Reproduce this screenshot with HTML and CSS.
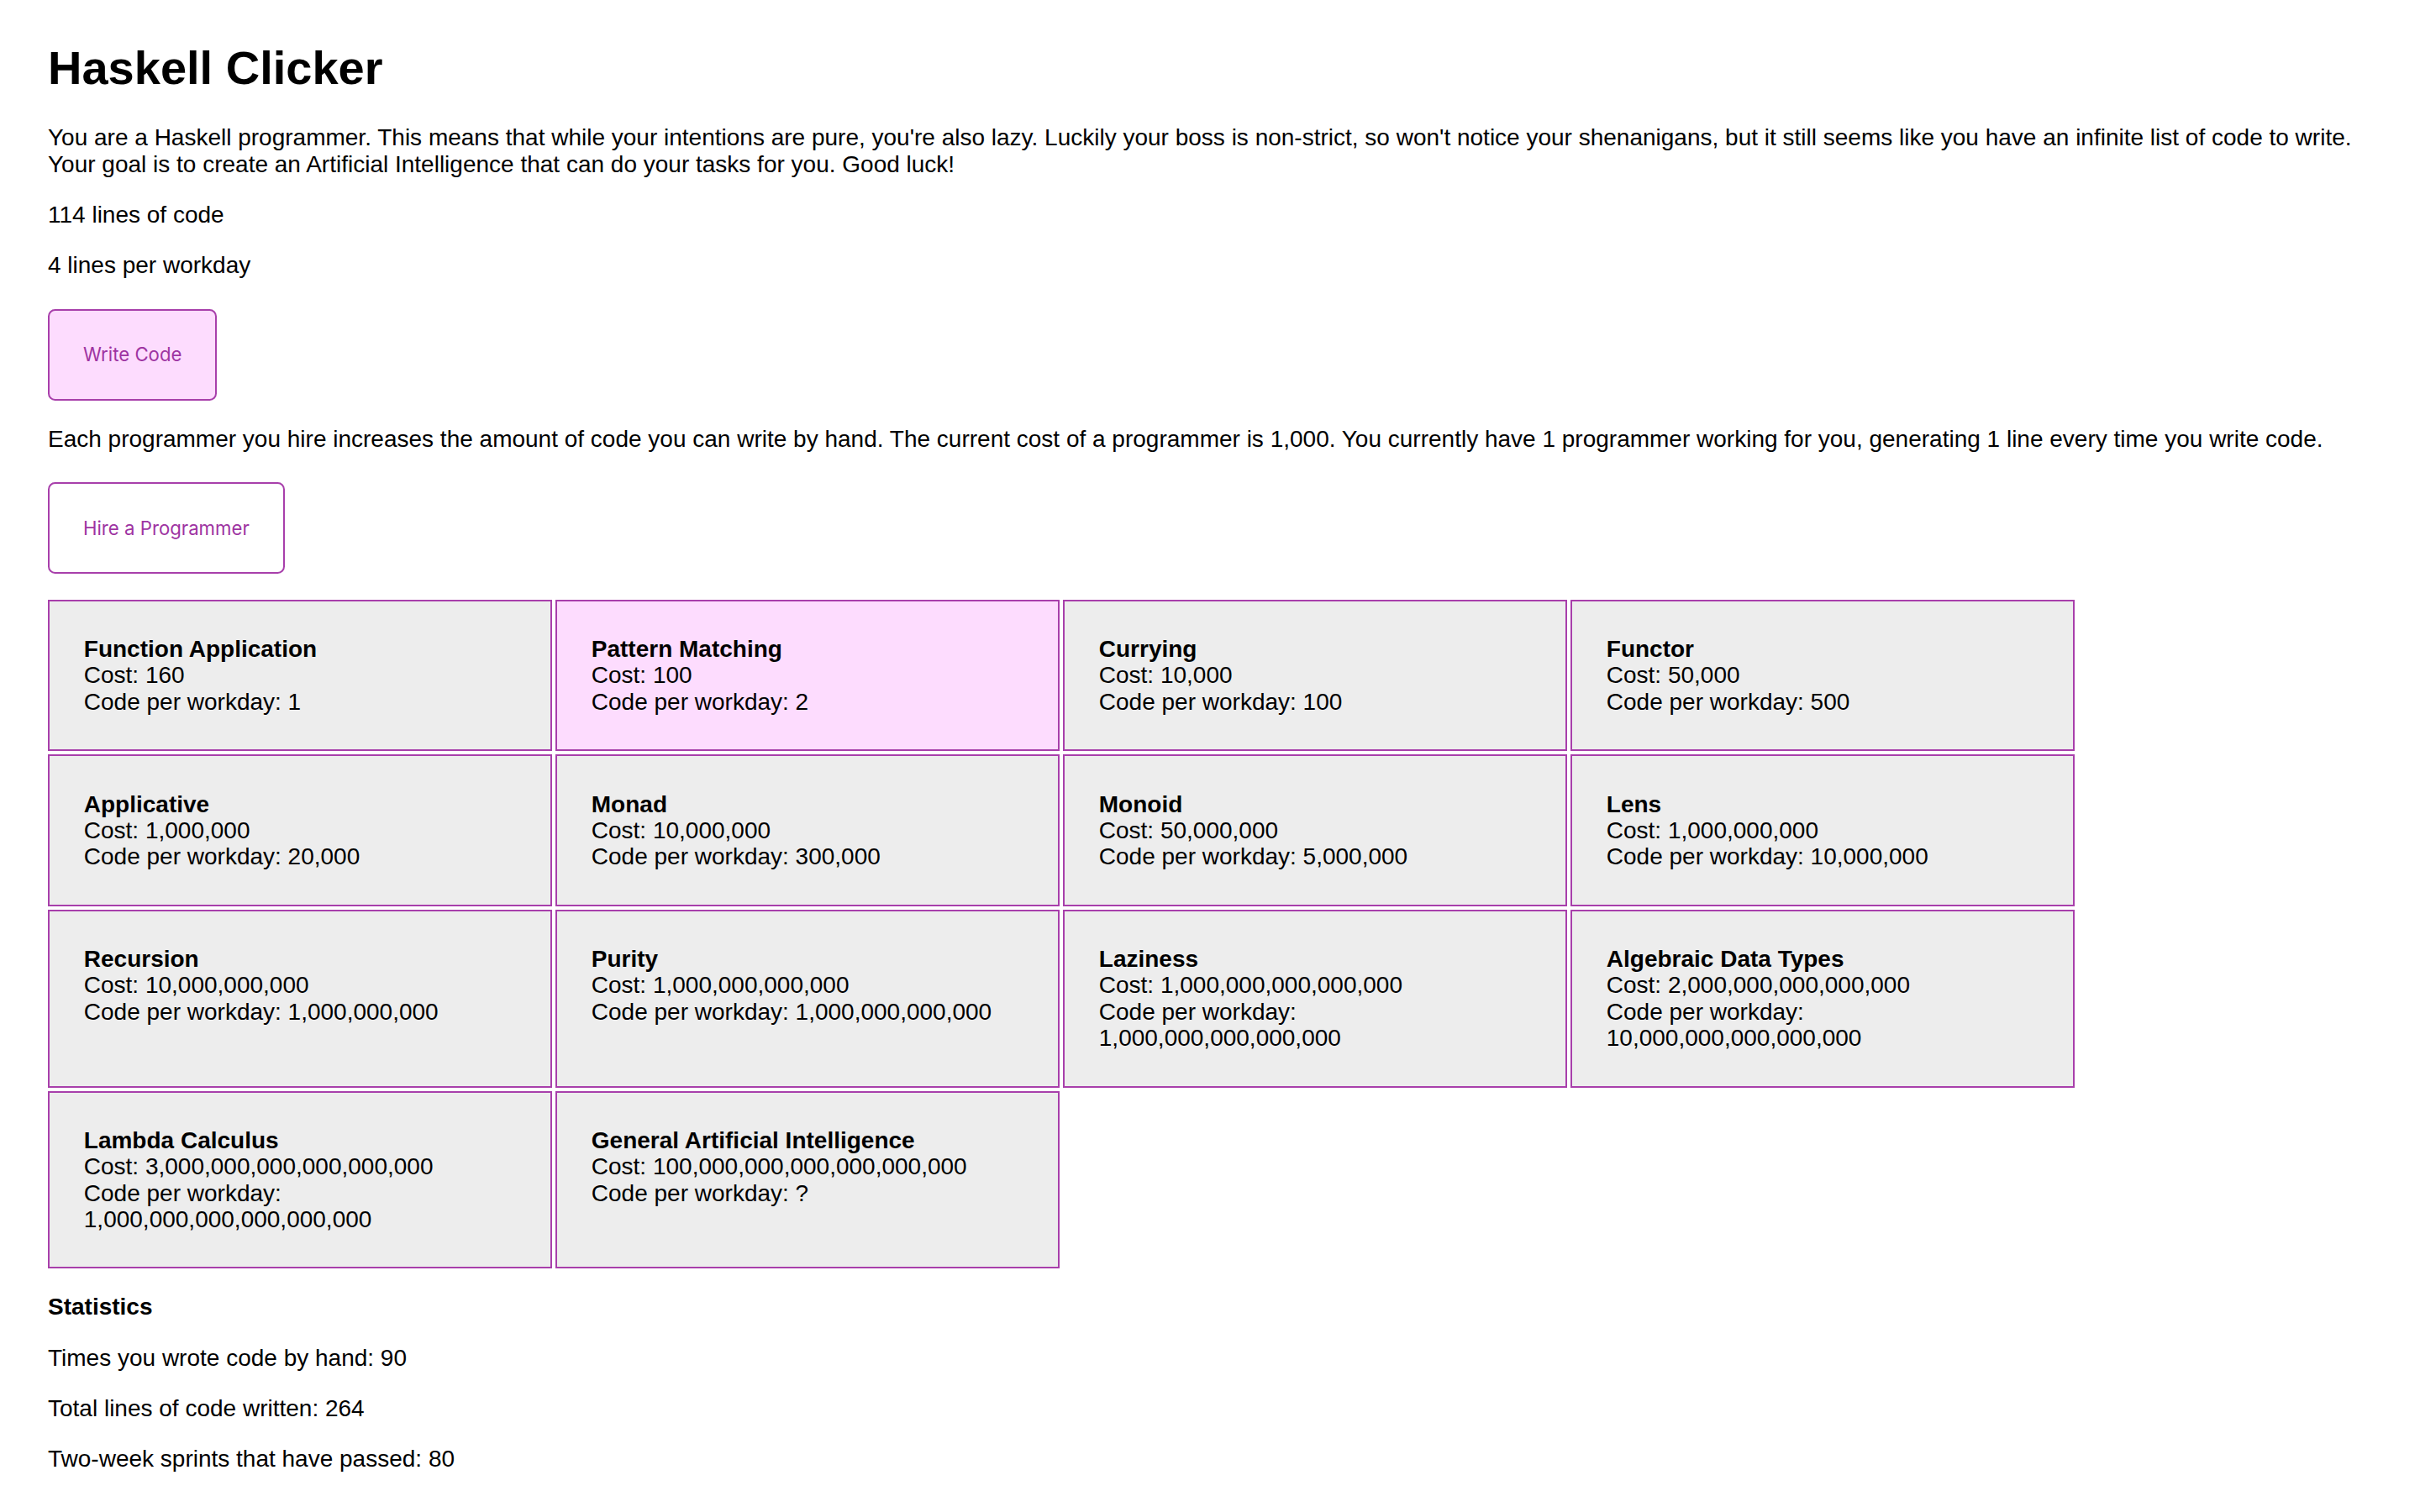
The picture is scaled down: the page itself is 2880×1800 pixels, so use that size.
FILE: index.html
```html
<!DOCTYPE html>
<html lang="en">
<head>
<meta charset="utf-8">
<title>Haskell Clicker</title>
<link rel="stylesheet" href="styles.css">
</head>
<body>
<h1 class="title">Haskell Clicker</h1>
<p class="text">You are a Haskell programmer. This means that while your intentions are pure, you're also lazy. Luckily your boss is non-strict, so won't notice your shenanigans, but it still seems like you have an infinite list of code to write. Your goal is to create an Artificial Intelligence that can do your tasks for you. Good luck!</p>
<p class="text">114 lines of code</p>
<p class="text">4 lines per workday</p>
<div class="btn-row"><button class="btn btn-active">Write Code</button></div>
<p class="text">Each programmer you hire increases the amount of code you can write by hand. The current cost of a programmer is 1,000. You currently have 1 programmer working for you, generating 1 line every time you write code.</p>
<div class="btn-row"><button class="btn">Hire a Programmer</button></div>
<div class="grid">
  <div class="card"><strong class="card-title">Function Application</strong><span class="card-line">Cost: 160</span><span class="card-line">Code per workday: 1</span></div>
  <div class="card card-active"><strong class="card-title">Pattern Matching</strong><span class="card-line">Cost: 100</span><span class="card-line">Code per workday: 2</span></div>
  <div class="card"><strong class="card-title">Currying</strong><span class="card-line">Cost: 10,000</span><span class="card-line">Code per workday: 100</span></div>
  <div class="card"><strong class="card-title">Functor</strong><span class="card-line">Cost: 50,000</span><span class="card-line">Code per workday: 500</span></div>
  <div class="card"><strong class="card-title">Applicative</strong><span class="card-line">Cost: 1,000,000</span><span class="card-line">Code per workday: 20,000</span></div>
  <div class="card"><strong class="card-title">Monad</strong><span class="card-line">Cost: 10,000,000</span><span class="card-line">Code per workday: 300,000</span></div>
  <div class="card"><strong class="card-title">Monoid</strong><span class="card-line">Cost: 50,000,000</span><span class="card-line">Code per workday: 5,000,000</span></div>
  <div class="card"><strong class="card-title">Lens</strong><span class="card-line">Cost: 1,000,000,000</span><span class="card-line">Code per workday: 10,000,000</span></div>
  <div class="card"><strong class="card-title">Recursion</strong><span class="card-line">Cost: 10,000,000,000</span><span class="card-line">Code per workday: 1,000,000,000</span></div>
  <div class="card"><strong class="card-title">Purity</strong><span class="card-line">Cost: 1,000,000,000,000</span><span class="card-line">Code per workday: 1,000,000,000,000</span></div>
  <div class="card"><strong class="card-title">Laziness</strong><span class="card-line">Cost: 1,000,000,000,000,000</span><span class="card-line">Code per workday: 1,000,000,000,000,000</span></div>
  <div class="card"><strong class="card-title">Algebraic Data Types</strong><span class="card-line">Cost: 2,000,000,000,000,000</span><span class="card-line">Code per workday: 10,000,000,000,000,000</span></div>
  <div class="card"><strong class="card-title">Lambda Calculus</strong><span class="card-line">Cost: 3,000,000,000,000,000,000</span><span class="card-line">Code per workday: 1,000,000,000,000,000,000</span></div>
  <div class="card"><strong class="card-title">General Artificial Intelligence</strong><span class="card-line">Cost: 100,000,000,000,000,000,000</span><span class="card-line">Code per workday: ?</span></div>
</div>
<p class="text stats-title">Statistics</p>
<p class="text">Times you wrote code by hand: 90</p>
<p class="text">Total lines of code written: 264</p>
<p class="text">Two-week sprints that have passed: 80</p>
</body>
</html>
```
FILE: styles.css
```css
html, body {
  background: #ffffff;
}
body {
  margin: 0;
  padding: 13.5px 57px;
  font-family: "Liberation Sans", Arial, Helvetica, sans-serif;
  font-size: 28px;
  line-height: 32px;
  color: #000000;
}
.title {
  font-size: 56px;
  font-weight: bold;
  line-height: 1.15;
  margin: 35px 0;
}
.text {
  margin: 28.3px 0;
}
.btn-row {
  display: flex;
  margin: 35.2px 0 30px;
}
.btn {
  font-family: Inter, "Noto Sans", sans-serif;
  font-size: 22.2px;
  line-height: 23.4px;
  color: #9e34a2;
  background: #ffffff;
  border: 2px solid #a83fab;
  border-radius: 8.5px;
  padding: 40.8px 40px;
  cursor: pointer;
}
.btn-active {
  background: #fddcfe;
}
.grid {
  display: grid;
  grid-template-columns: repeat(4, 600px);
  gap: 4px;
  margin-top: 31px;
}
.card {
  display: flex;
  flex-direction: column;
  background: #ededed;
  border: 2px solid #a83fab;
  padding: 41.3px 40.8px;
  line-height: 31.3px;
}
.card-active {
  background: #fddcfe;
}
.card-title {
  font-weight: bold;
}
.stats-title {
  font-weight: bold;
  margin-top: 30px;
}
```
